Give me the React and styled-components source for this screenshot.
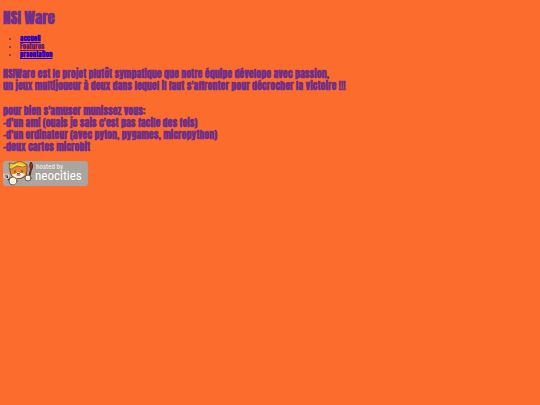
import React from "react";
import styled, { createGlobalStyle } from "styled-components";

const GlobalStyle = createGlobalStyle`
  body {
    margin: 0;
    background: #fc6c2c;
    color: #702f8a;
    font-family: Impact, Anton, "Roboto Condensed", "Roboto", sans-serif;
    font-weight: 700;
  }
`;

const Page = styled.main`
  padding: 9px 3px;
`;

const Title = styled.h1`
  margin: 0 0 8px;
  font-size: 15px;
  line-height: 17px;
`;

const Menu = styled.ul`
  margin: 0 0 10px;
  padding: 0 0 0 17px;
  font-size: 7px;
  line-height: 8px;

  li::marker {
    font-size: 6px;
  }
`;

const MenuLink = styled.a`
  color: ${(p) => (p.$visited ? "#701c6c" : "#2500c8")};
  text-decoration: underline;
`;

const Text = styled.p`
  margin: 0 0 13px;
  font-size: 10px;
  line-height: 12px;
`;

const Badge = styled.a`
  display: block;
  width: 85px;
  margin-top: -6px;
`;

const Drawing = styled.svg`
  display: block;
  width: 100%;
  font-family: "Roboto Condensed", "Open Sans", sans-serif;
  font-weight: 400;
`;

const links = [
  { label: "accueil" },
  { label: "Features", visited: true },
  { label: "prsentation" },
];

function NeocitiesBadge() {
  return (
    <Drawing viewBox="0 0 85 27" role="img" aria-label="hosted by neocities">
      <rect x="0" y="1" width="85" height="25" rx="3" fill="#aaa5a1" />
      <g strokeLinejoin="round" strokeLinecap="round">
        <path d="M6 19 3 16m3 3 4 3" stroke="#46352f" strokeWidth="3" />
        <path d="M1 14v3l3 2 2-1-1-4M3 14v3" fill="none" stroke="#eee5df" />
        <path d="m28 9-2 9" stroke="#572821" strokeWidth="2" />
        <path d="M27 8q-1-4 1-6 3 3 1 7z" fill="#b52c20" stroke="#58271e" />
        <path d="m7 7-1-4 4 1q6-4 11-1l3 2v6l-1 5q-5 4-11 2-6-2-5-11z" fill="#e8872f" stroke="#76502d" />
        <path d="M9 14q1 4 6 4t7-4l-3-1-4-1-3 2z" fill="#fff0db" />
        <path d="m6 8 1-5 4 1q5-4 10-1l3 3-4 1-6-1-5 3z" fill="#edc32f" stroke="#9b742a" />
        <path d="m10 6 5-2m1 1 4 1" stroke="#ffe77b" />
        <path d="M12 11v1m7-1v1" stroke="#392820" strokeWidth="1" />
        <path d="m14 13 1 1 2-1m-3 2h3" fill="none" stroke="#73352b" />
        <circle cx="10" cy="21" r="4" fill="#fff8ed" stroke="#66564e" />
        <circle cx="25" cy="18" r="3" fill="#fff8ed" stroke="#66564e" />
        <path d="m9 22 2 0m13-3 2 0" stroke="#ddcbbd" />
      </g>
      <text x="33" y="9" fontSize="7" fill="#f5f1ee">hosted by</text>
      <text x="32" y="20" fontSize="13" fill="#fff">neocities</text>
    </Drawing>
  );
}

export default function App() {
  return (
    <>
      <GlobalStyle />
      <Page>
        <Title>NSI Ware</Title>
        <nav>
          <Menu>
            {links.map(({ label, visited }) => (
              <li key={label}>
                <MenuLink href="#" $visited={visited}>{label}</MenuLink>
              </li>
            ))}
          </Menu>
        </nav>
        <Text>
          NSIWare est le projet plutôt sympatique que notre équipe dévelope avec passion,
          <br />
          un jeux multijoueur à deux dans lequel il faut s'affronter pour décrocher la victoire !!!
        </Text>
        <Text>
          pour bien s'amuser munissez vous:
          <br />
          -d'un ami (ouais je sais c'est pas facile des fois)
          <br />
          -d'un ordinateur (avec pyton, pygames, micropython)
          <br />
          -deux cartes microbit
        </Text>
        <Badge href="#">
          <NeocitiesBadge />
        </Badge>
      </Page>
    </>
  );
}
